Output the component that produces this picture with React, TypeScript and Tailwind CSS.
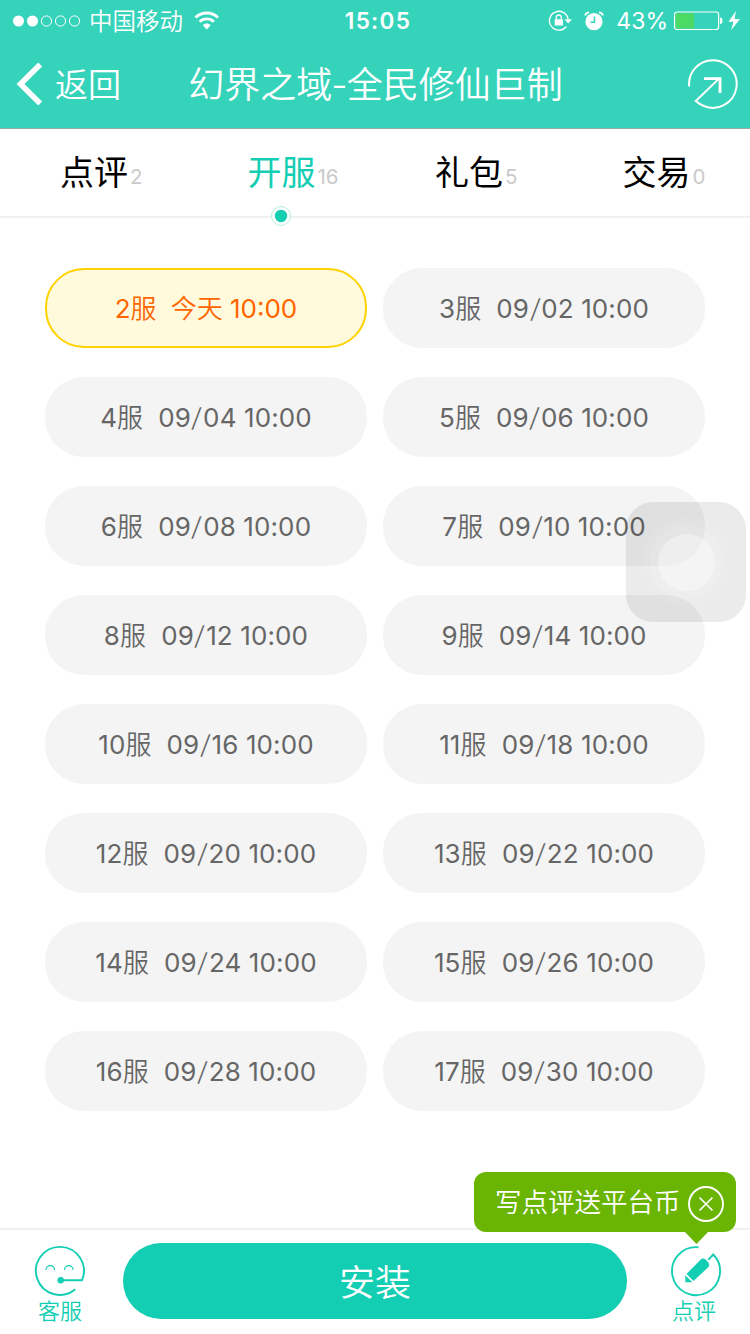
const TABS = [
  { label: "点评", count: "2" },
  { label: "开服", count: "16", active: true },
  { label: "礼包", count: "5" },
  { label: "交易", count: "0" },
];

const SERVERS: { id: string; day?: [string, string] }[] = [
  { id: "2" },
  { id: "3", day: ["09", "02"] },
  { id: "4", day: ["09", "04"] },
  { id: "5", day: ["09", "06"] },
  { id: "6", day: ["09", "08"] },
  { id: "7", day: ["09", "10"] },
  { id: "8", day: ["09", "12"] },
  { id: "9", day: ["09", "14"] },
  { id: "10", day: ["09", "16"] },
  { id: "11", day: ["09", "18"] },
  { id: "12", day: ["09", "20"] },
  { id: "13", day: ["09", "22"] },
  { id: "14", day: ["09", "24"] },
  { id: "15", day: ["09", "26"] },
  { id: "16", day: ["09", "28"] },
  { id: "17", day: ["09", "30"] },
];

function StatusBar() {
  return (
    <div className="flex h-[41px] items-center whitespace-nowrap">
      <div className="flex flex-1 items-center pl-[12px]">
        <svg width="70" height="14" viewBox="0 0 70 14" fill="none" stroke="white">
          <circle cx="6.5" cy="7" r="5.5" fill="white" stroke="none" />
          <circle cx="20.5" cy="7" r="5.5" fill="white" stroke="none" />
          <circle cx="34.5" cy="7" r="5.1" />
          <circle cx="48.5" cy="7" r="5.1" />
          <circle cx="62.5" cy="7" r="5.1" />
        </svg>
        <span className="mt-[2px] ml-[7px] text-[23.5px] leading-10 font-[350]">中国移动</span>
        <svg className="ml-[11px]" width="26" height="20" viewBox="0 0 26 20" fill="none" stroke="white">
          <path d="M1.5 6.5C8 .6 17.500 .6 24 6.500" strokeWidth="3" />
          <path d="M5.600 10.700C9.600 7 15.900 7 19.900 10.700" strokeWidth="2.700" />
          <path d="M8.800 14.300C11 12 14.500 12 16.700 14.300L12.750 18.500Z" fill="white" stroke="none" />
        </svg>
      </div>
      <span className="mt-px ml-[2px] text-[22.500px] leading-10 font-semibold tracking-[1.300px]">15:05</span>
      <div className="flex flex-1 items-center justify-end pr-[8px]">
        <svg width="24" height="22" viewBox="0 0 24 22" fill="none" stroke="white" strokeWidth="1.300">
          <path d="M18.300 16.500A9.400 9.400 0 1 1 20.200 9.500" />
          <path d="M16.500 9.300H24L20.200 13.500Z" fill="white" stroke="none" />
          <rect x="6.700" y="9.200" width="8.200" height="6.300" fill="white" stroke="none" />
          <path d="M8.300 9.500V7.500a2.500 2.500 0 0 1 5 0V9.500" />
        </svg>
        <svg className="ml-[12px]" width="20" height="20" viewBox="0 0 20 20">
          <circle cx="10" cy="10.700" r="8.600" fill="white" />
          <path d="M10.500 5.500V11.200H6.500" fill="none" stroke="#36d3bb" strokeWidth="1.500" />
          <path d="M1 4.500Q2 1.500 5 1.300M19 4.500Q18 1.500 15 1.300" fill="none" stroke="white" strokeWidth="1.800" />
        </svg>
        <span className="mt-px ml-[12px] text-[23px] leading-10">43%</span>
        <svg className="ml-[6px]" width="68" height="20" viewBox="0 0 68 20">
          <rect x=".6" y="1" width="44" height="17.500" rx="2.500" fill="none" stroke="white" strokeWidth="1.200" />
          <rect x="1.600" y="2.200" width="18.500" height="15.300" rx="1" fill="#4cd964" />
          <path d="M46 6.500Q48.500 6.500 48.500 9.800T46 13.100Z" fill="white" />
          <path d="M62 0L54.500 10.700H59.500L57 19.300L66 8H60.500Z" fill="white" />
        </svg>
      </div>
    </div>
  );
}

function Header() {
  return (
    <header className="h-[129px] shrink-0 border-b border-[#9caaa6] bg-[#36d3bb] text-white">
      <StatusBar />
      <div className="flex h-[86px] items-center">
        <div className="flex flex-1 items-center pl-[16px]">
          <svg width="27" height="44" viewBox="0 0 27 44" fill="none" stroke="white" strokeWidth="5.500">
            <path d="M24.200 2.500L4.500 22L24.200 41.500" />
          </svg>
          <span className="mt-[2px] ml-[12px] text-[33px] leading-[48px] font-[350]">返回</span>
        </div>
        <h1 className="mt-[2px] mr-[3px] text-[36px] leading-[52px] font-[350] whitespace-nowrap">
          幻界之域<span className="mx-[-1px] inline-block">-</span>全民修仙巨制
        </h1>
        <div className="flex flex-1 justify-end pr-[12px]">
          <svg className="mb-px" width="52" height="52" viewBox="0 0 52 52" fill="none" stroke="white" strokeWidth="2">
            <path d="M3.200 28.500A23.800 23.800 0 1 1 18.500 48.300Q13.500 46.500 9.800 43L34 19.600" />
            <path d="M18 20.600H34V35" strokeWidth="2.800" />
          </svg>
        </div>
      </div>
    </header>
  );
}

function Tabs() {
  return (
    <nav className="grid h-[89px] shrink-0 grid-cols-4 border-b-2 border-[#f1f1f1]">
      {TABS.map((tab) => (
        <div key={tab.label} className="relative flex items-baseline pl-[60px]">
          <span className={tab.active ? "text-[34px] leading-[88px] text-[#14ceb3]" : "text-[34px] leading-[88px] text-black"}>
            {tab.label}
          </span>
          <span className="mb-px ml-[2px] -translate-y-px text-[20.500px] text-[#cacaca]">{tab.count}</span>
          {tab.active && (
            <svg className="absolute top-[76px] left-[82.500px]" width="22" height="22" viewBox="0 0 22 22">
              <circle cx="11" cy="11" r="9.500" fill="white" stroke="#b7eee5" />
              <circle cx="11" cy="11" r="6.200" fill="#14ceb3" />
            </svg>
          )}
        </div>
      ))}
    </nav>
  );
}

function AssistiveTouch() {
  return (
    <div className="absolute top-[502px] left-[626px] flex size-[120px] items-center justify-center rounded-[27px] bg-black/8">
      <div className="flex size-[88px] items-center justify-center rounded-full bg-white/8">
        <div className="flex size-[74px] items-center justify-center rounded-full bg-white/10">
          <div className="size-[57px] rounded-full bg-white/35" />
        </div>
      </div>
    </div>
  );
}

function Footer() {
  return (
    <footer className="relative flex h-[106px] shrink-0 border-t-2 border-[#f0f0f0] text-[#14ceb3]">
      <div className="flex w-[123px] flex-col items-center pt-[15px] pr-[3px]">
        <svg className="mr-[2px]" width="52" height="52" viewBox="0 0 52 52" fill="none" stroke="currentColor" strokeWidth="1.900">
          <path d="M42.300 44.300A24 24 0 1 1 49 35.300H28" />
          <circle cx="27.700" cy="35.300" r="3.200" fill="currentColor" stroke="none" />
          <path d="M13 25a4.300 4.300 0 0 1 8.600 0M31.500 25a4.300 4.300 0 0 1 8.600 0" strokeWidth="1.200" />
        </svg>
        <span className="mt-px text-[22px] leading-[26px] font-[350]">客服</span>
      </div>
      <button className="mt-[13px] h-[76px] w-[504px] rounded-full bg-[#14ceb3] pt-[4px] text-[36px] leading-[72px] font-[350] text-white">
        安装
      </button>
      <div className="flex flex-1 flex-col items-center pt-[15px] pl-[15px]">
        <svg className="mr-px" width="52" height="52" viewBox="0 0 52 52" fill="none" stroke="currentColor" strokeWidth="1.900">
          <path d="M28.500 2.300A24 24 0 1 0 43.300 9.500L38.300 14.800" />
          <path d="M30.500 14.700Q33 12.500 35.500 14.500L38 17Q40 19.500 38.500 22L23.500 36L16.500 29Z" fill="currentColor" stroke="none" />
          <path d="M15.300 30.300L22.300 37.300H15.300Z" fill="currentColor" stroke="none" />
        </svg>
        <span className="mt-px mr-[4px] text-[22px] leading-[26px] font-[350]">点评</span>
      </div>
      <div className="absolute top-[-58px] left-[474px] flex h-[60px] w-[262px] items-center rounded-xl bg-[#6ab503] pl-[21px] text-white">
        <span className="text-[26.500px] leading-[56px] font-[350] whitespace-nowrap">写点评送平台币</span>
        <svg className="mt-[4px] ml-[6px]" width="38" height="38" viewBox="0 0 38 38" fill="none" stroke="white" strokeWidth="1.900">
          <circle cx="19" cy="19" r="17" />
          <path d="M12.500 12.500L25.500 25.500M25.500 12.500L12.500 25.500" strokeWidth="1.600" />
        </svg>
        <svg className="absolute top-[59px] left-[210px]" width="25" height="13" viewBox="0 0 25 13">
          <path d="M0 0H25L12.500 13Z" fill="#6ab503" />
        </svg>
      </div>
    </footer>
  );
}

export default function App() {
  return (
    <div className="relative flex h-[1334px] w-[750px] flex-col overflow-hidden bg-white font-[Inter,'Noto_Sans_CJK_SC',sans-serif]">
      <Header />
      <Tabs />
      <main className="grid flex-1 grid-cols-2 content-start gap-x-4 gap-y-[29px] px-[45px] pt-[50px]">
        {SERVERS.map((s) => (
          <div
            key={s.id}
            className={
              s.day
                ? "flex h-20 items-center justify-center gap-[15px] rounded-[39px] bg-[#f4f4f4] text-[26px] tracking-[.12px] whitespace-nowrap text-[#666]"
                : "flex h-20 items-center justify-center gap-[14px] rounded-[39px] border-2 border-[#ffd200] bg-[#fffadc] text-[26px] whitespace-nowrap text-[#ff6600]"
            }
          >
            <span>
              {s.id}
              <span className="font-[350]">服</span>
            </span>
            <span>
              {s.day ? (
                <>
                  {s.day[0]}
                  <span className="mx-[1.500px] inline-block -skew-x-6 font-light">/</span>
                  {s.day[1]}
                </>
              ) : (
                <span className="font-[350]">今天</span>
              )}
              {" 10:00"}
            </span>
          </div>
        ))}
      </main>
      <Footer />
      <AssistiveTouch />
    </div>
  );
}
